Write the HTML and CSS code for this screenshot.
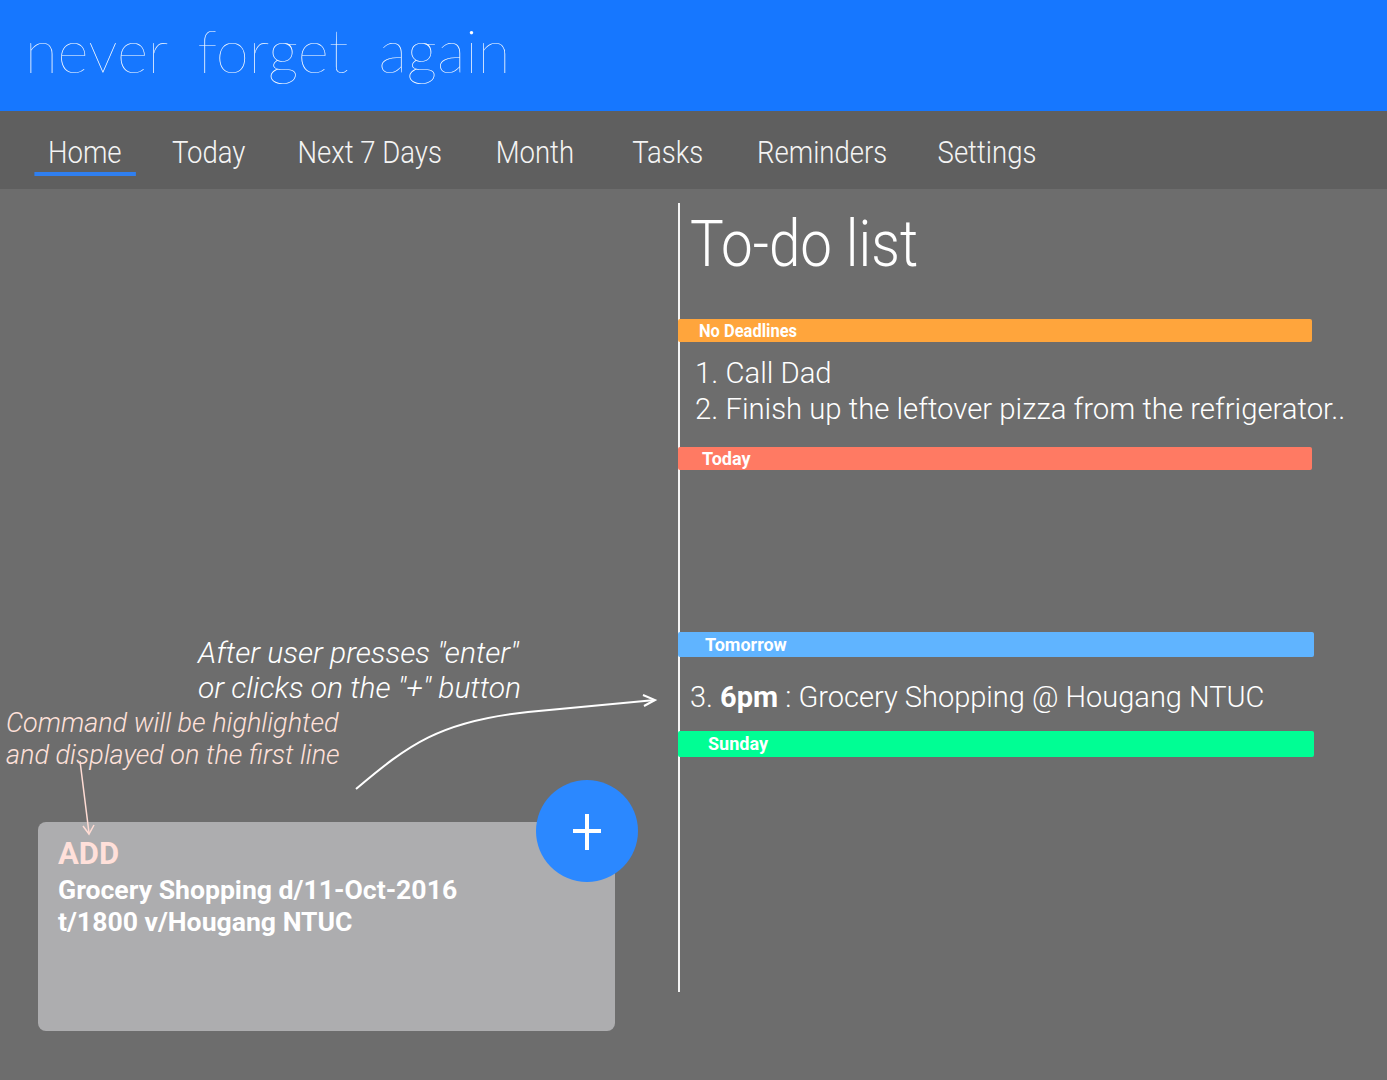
FILE: index.html
```html
<!DOCTYPE html>
<html lang="en">
<head>
<meta charset="utf-8">
<title>never forget again</title>
<link rel="stylesheet" href="styles.css">
</head>
<body>
<header class="brand">
  <h1 class="brand__title">never forget again</h1>
</header>
<nav class="tabs">
  <ul class="tabs__list">
    <li class="tabs__item tabs__item--active">Home</li>
    <li class="tabs__item tabs__item--today">Today</li>
    <li class="tabs__item tabs__item--next">Next 7 Days</li>
    <li class="tabs__item tabs__item--month">Month</li>
    <li class="tabs__item">Tasks</li>
    <li class="tabs__item tabs__item--reminders">Reminders</li>
    <li class="tabs__item">Settings</li>
  </ul>
</nav>
<main class="main">
  <section class="compose">
    <p class="note note--action">After user presses "enter"<br>or clicks on the "+" button</p>
    <p class="note note--hint">Command will be highlighted<br>and displayed on the first line</p>
    <div class="card">
      <div class="card__cmd">ADD</div>
      <div class="card__text">Grocery Shopping d/11-Oct-2016<br>t/1800 v/Hougang NTUC</div>
      <div class="fab">
        <svg class="fab__icon" width="28" height="36" viewBox="0 0 28 36"><path d="M14 0V36M0 17H28" stroke="#fff" stroke-width="4" fill="none"/></svg>
      </div>
    </div>
    <svg class="arrows" width="678" height="891" viewBox="0 0 678 891">
      <path d="M356 600 C408 556 440 532 528 523 L655 511" stroke="#fff" stroke-width="2" fill="none"/>
      <path d="M643 506 L655 511 L644 517" stroke="#fff" stroke-width="2" fill="none"/>
      <path d="M80 572 L89 644" stroke="#ffdcd4" stroke-width="1.5" fill="none"/>
      <path d="M83 637 L89 645 L94 636" stroke="#ffdcd4" stroke-width="1.5" fill="none"/>
    </svg>
  </section>
  <section class="todo">
    <h2 class="todo__title"><span class="todo__title-text">To-do list</span></h2>
    <div class="group">
      <div class="group__bar group__bar--none"><span class="group__label group__label--cond">No Deadlines</span></div>
      <ol class="group__items group__items--none">
        <li>1. Call Dad</li>
        <li>2. Finish up the leftover pizza from the refrigerator..</li>
      </ol>
    </div>
    <div class="group">
      <div class="group__bar group__bar--today"><span class="group__label">Today</span></div>
      <ol class="group__items group__items--empty"></ol>
    </div>
    <div class="group">
      <div class="group__bar group__bar--tomorrow"><span class="group__label">Tomorrow</span></div>
      <ol class="group__items group__items--tomorrow">
        <li>3. <b>6pm</b> : Grocery Shopping @ Hougang NTUC</li>
      </ol>
    </div>
    <div class="group">
      <div class="group__bar group__bar--sunday"><span class="group__label">Sunday</span></div>
    </div>
  </section>
</main>
</body>
</html>
```
FILE: styles.css
```css
* { box-sizing: border-box; }
html, body { margin: 0; padding: 0; }
body {
  width: 1387px;
  height: 1080px;
  overflow: hidden;
  background: #6d6d6d;
  font-family: Roboto, "Noto Sans", sans-serif;
  color: #fff;
}

/* header */
.brand {
  height: 111px;
  background: #1677ff;
  padding: 15px 0 0 25px;
}
.brand__title {
  margin: 0;
  font-family: Lato, "Open Sans", sans-serif;
  font-weight: 200;
  font-size: 60px;
  line-height: 70px;
  word-spacing: 13px;
  color: #fff;
}

/* nav */
.tabs {
  height: 78px;
  background: #5f5f5f;
  padding-top: 21px;
}
.tabs__list {
  list-style: none;
  margin: 0;
  padding: 0 0 0 39.5px;
  display: flex;
  gap: 28px;
  transform: scaleX(0.86);
  transform-origin: left top;
}
.tabs__item {
  padding: 0 16.3px;
  font-size: 32px;
  font-weight: 300;
  line-height: 40px;
  color: #f4f4f4;
  border-bottom: 4px solid transparent;
  white-space: nowrap;
}
.tabs__item--active { border-bottom-color: #2f7ff0; }
.tabs__item--today { margin-left: -2px; }
.tabs__item--next { margin-right: 2px; }
.tabs__item--month { margin-right: 7px; }
.tabs__item--reminders { margin-left: 2px; margin-right: -2px; }

/* main */
.main {
  display: flex;
  height: 891px;
}
.compose {
  position: relative;
  width: 678px;
  flex: none;
  padding-top: 446px;
}
.note {
  margin: 0;
  font-style: italic;
  font-weight: 300;
  white-space: nowrap;
}
.note--action {
  padding-left: 198px;
  font-size: 30px;
  line-height: 35px;
  color: #fff;
}
.note--hint {
  margin-top: 2px;
  padding-left: 6px;
  font-size: 27px;
  line-height: 32px;
  color: #ffe1da;
}
.card {
  position: relative;
  margin: 51px 0 0 38px;
  width: 577px;
  height: 209px;
  background: #adadaf;
  border-radius: 8px;
  padding: 14px 0 0 20px;
}
.card__cmd {
  font-size: 31px;
  font-weight: 700;
  line-height: 36px;
  color: #ffe0da;
}
.card__text {
  margin-top: 2px;
  font-size: 26.6px;
  font-weight: 700;
  line-height: 32px;
  color: #fff;
  white-space: nowrap;
}
.fab {
  position: absolute;
  left: 498px;
  top: -42px;
  width: 102px;
  height: 102px;
  border-radius: 50%;
  background: #2b88ff;
  display: flex;
  align-items: center;
  justify-content: center;
}
.fab__icon { display: block; margin-top: 1px; }
.arrows {
  position: absolute;
  left: 0;
  top: 0;
  pointer-events: none;
}

/* todo */
.todo {
  flex: 1;
  margin-top: 14px;
  height: 789px;
  border-left: 2px solid #f4f4f4;
}
.todo__title {
  margin: 5px 0 0;
  padding-left: 10px;
  font-size: 65px;
  font-weight: 300;
  line-height: 72px;
  white-space: nowrap;
}
.todo__title-text {
  display: inline-block;
  transform: scaleX(0.87);
  transform-origin: left center;
}
.group__bar {
  margin-left: -2px;
  width: 634px;
  height: 23px;
  border-radius: 2px;
  font-size: 18px;
  font-weight: 700;
  line-height: 23px;
  color: #fff;
  white-space: nowrap;
}
.group__bar--none { margin-top: 39px; background: #ffa53c; padding-left: 21px; }
.group__bar--today { margin-top: 20px; background: #ff7a63; padding-left: 24px; }
.group__bar--tomorrow { height: 25px; line-height: 25px; width: 636px; background: #60b4ff; padding-left: 27px; }
.group__bar--sunday { margin-top: 16px; height: 26px; line-height: 26px; width: 636px; background: #00fe94; padding-left: 30px; }
.group__label { display: inline-block; }
.group__label--cond {
  transform: scaleX(0.915);
  transform-origin: left center;
}
.group__items {
  list-style: none;
  margin: 0;
  padding: 0;
  font-size: 29px;
  font-weight: 300;
  line-height: 36px;
  white-space: nowrap;
}
.group__items--none { margin-top: 13px; padding-left: 15px; font-size: 29.3px; }
.group__items--empty { height: 162px; }
.group__items--tomorrow { margin-top: 22px; padding-left: 10px; }
.group__items b { font-weight: 700; }
```
